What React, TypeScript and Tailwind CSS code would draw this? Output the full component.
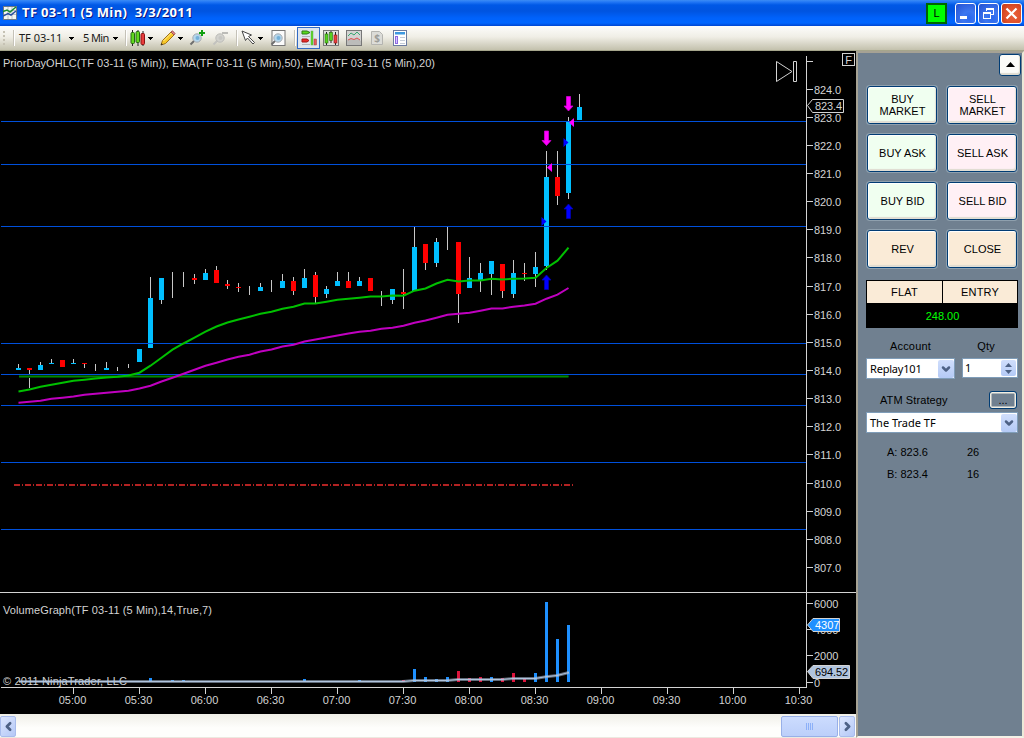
import type { ReactNode } from 'react'
import { ChevronDown, ChevronLeft, ChevronRight } from 'lucide-react'

type Side = 'up' | 'down' | 'none'

// side, wick top, wick bottom, body top, body bottom
type Candle = [Side, number, number, number, number]

const UP = '#00bfff'
const DOWN = '#ff0000'
const AXIS = '#d3d3d3'

const CANDLES: Candle[] = [
  ['up', 364, 370, 368, 370],
  ['down', 368, 388, 368, 370],
  ['up', 362, 370, 365, 370],
  ['up', 359, 364, 363, 364],
  ['down', 360, 367, 360, 367],
  ['up', 359, 364, 363, 364],
  ['down', 363, 368, 363, 364],
  ['none', 364, 371, 0, 0],
  ['up', 362, 370, 368, 370],
  ['none', 367, 371, 0, 0],
  ['none', 364, 368, 0, 0],
  ['up', 349, 362, 349, 362],
  ['up', 277, 348, 298, 348],
  ['up', 278, 304, 278, 300],
  ['none', 272, 298, 0, 0],
  ['none', 272, 287, 0, 0],
  ['down', 274, 284, 278, 280],
  ['up', 269, 280, 273, 280],
  ['down', 266, 283, 270, 283],
  ['down', 280, 289, 284, 286],
  ['down', 283, 292, 287, 288],
  ['none', 286, 295, 0, 0],
  ['up', 283, 291, 287, 291],
  ['none', 280, 292, 0, 0],
  ['up', 274, 288, 281, 288],
  ['down', 277, 295, 281, 291],
  ['up', 269, 288, 278, 288],
  ['down', 272, 303, 275, 297],
  ['up', 286, 298, 289, 294],
  ['up', 272, 286, 281, 286],
  ['down', 272, 288, 281, 288],
  ['up', 277, 286, 281, 286],
  ['down', 278, 291, 278, 291],
  ['none', 291, 306, 0, 0],
  ['up', 289, 304, 289, 300],
  ['down', 269, 309, 292, 294],
  ['up', 227, 291, 247, 291],
  ['down', 244, 270, 244, 263],
  ['up', 238, 267, 242, 263],
  ['none', 227, 250, 0, 0],
  ['down', 242, 323, 242, 294],
  ['up', 257, 288, 278, 288],
  ['up', 263, 292, 273, 280],
  ['up', 261, 295, 261, 274],
  ['down', 264, 298, 264, 291],
  ['up', 260, 298, 273, 294],
  ['down', 263, 281, 273, 274],
  ['up', 252, 287, 267, 274],
  ['up', 151, 270, 177, 266],
  ['down', 151, 205, 177, 196],
  ['up', 117, 199, 122, 193],
  ['up', 94, 120, 107, 120]
]

const EMA20 = [
  391.5, 389.5, 386.7, 384.7, 382.7, 380.7, 379.7, 378.6, 377.5, 376.7, 375.5, 372.7, 365.7, 357.7,
  349.7, 343.5, 337.7, 331.7, 326.5, 322.5, 319.5, 316.7, 313.7, 311.7, 308.7, 306.7, 303.5, 303.5,
  301.7, 299.7, 298.7, 297.7, 296.5, 296.5, 295.5, 295.7, 290.7, 288.5, 283.5, 279.7, 281.5, 280.5,
  280.5, 278.7, 279.5, 278.7, 278.5, 277.7, 268, 260.7, 247.7
]

const EMA50 = [
  402.7, 401.7, 400.7, 398.7, 397.7, 396.5, 394.7, 393.7, 392.7, 391.7, 390.7, 388.5, 385.7, 381.5,
  377.7, 373.7, 369.7, 365.7, 362.7, 359.5, 356.7, 354.7, 351.5, 349.5, 346.5, 344.7, 341.5, 339.5,
  337.5, 335.5, 333.5, 331.7, 330.7, 328.7, 327.7, 325.7, 322.7, 320.5, 317.7, 314.7, 313.7, 312.7,
  310.7, 308.5, 308.5, 306.7, 305.5, 303.7, 298.7, 294.7, 288
]

const LEVELS = [121, 164, 226, 343, 374, 405, 462, 529]

// bar index, top of the bar, colour
const VOLUME: Array<[number, number, string]> = [
  [12, 678, '#1e90ff'], [14, 680, '#1e90ff'], [15, 680, '#1e90ff'], [26, 679, '#1e90ff'],
  [31, 680, '#1e90ff'], [35, 680, '#dc143c'], [36, 669, '#1e90ff'], [37, 677, '#1e90ff'],
  [38, 679, '#1e90ff'], [39, 677, '#1e90ff'], [40, 671, '#dc143c'], [41, 678, '#dc143c'],
  [42, 677, '#dc143c'], [43, 677, '#1e90ff'], [44, 678, '#dc143c'], [45, 673, '#dc143c'],
  [46, 679, '#dc143c'], [47, 673, '#1e90ff'], [48, 602, '#1e90ff'], [49, 639, '#1e90ff'],
  [50, 625, '#1e90ff']
]

const VOLUME_AVG =
  '19,681.5 403,681.5 414,680.5 447,680.5 458,679.5 502,679.5 513,678.5 535,678.5 546,676.7 557,675.5 569,672.5'

const TIMES = ['05:00', '05:30', '06:00', '06:30', '07:00', '07:30', '08:00', '08:30', '09:00', '09:30', '10:00', '10:30']

const barX = (i: number) => 18 + i * 11
const toPoints = (ys: number[]) => ys.map((y, i) => `${barX(i) + 0.5},${y}`).join(' ')

function Arrow({ x, y, dir, color, edge }: { x: number; y: number; dir: 'up' | 'down'; color: string; edge: string }) {
  const d = dir === 'down' ? 'M-1.5 0.5H2.5V10H5L0.5 15L-4 10H-1.5Z' : 'M-1.5 14.5H2.5V5H5L0.5 0L-4 5H-1.5Z'
  return <path d={d} transform={`translate(${x} ${y})`} fill={color} stroke={edge} strokeWidth="0.8" />
}

function Chart() {
  return (
    <svg width="856" height="663" viewBox="0 51 856 663" className="block bg-black font-['Liberation_Sans',Arial,sans-serif]" fontSize="11" fill={AXIS}>
      {/* Candles */}
      <g shapeRendering="crispEdges">
        {CANDLES.map(([side, high, low, top, bottom], i) => (
          <g key={i}>
            <rect x={barX(i)} y={high} width="1" height={low - high} fill="#c8c8c8" />
            {side !== 'none' && (
              <rect x={barX(i) - 2} y={top} width="5" height={bottom - top} fill={side === 'up' ? UP : DOWN} />
            )}
          </g>
        ))}
        {LEVELS.map(y => (
          <rect key={y} x="1" y={y} width="805" height="1" fill="#0050dc" />
        ))}
      </g>

      {/* Indicators */}
      <path d="M19 376.5H568.5" stroke="#004800" strokeWidth="3" />
      <path d="M19 376.5H568.5" stroke="#008a00" strokeWidth="1" />
      <polyline points={toPoints(EMA50)} fill="none" stroke="#c000c0" strokeWidth="2" />
      <polyline points={toPoints(EMA20)} fill="none" stroke="#00c000" strokeWidth="2" />
      <path d="M14 485H573" stroke="#b22222" strokeWidth="2" strokeDasharray="6 2 1 2" shapeRendering="crispEdges" />

      {/* Executions */}
      <Arrow x={546} y={130.5} dir="down" color="#ff00ff" edge="#d000d0" />
      <Arrow x={568} y={96} dir="down" color="#ff00ff" edge="#d000d0" />
      <Arrow x={546} y={275} dir="up" color="#0000ff" edge="#0000b0" />
      <Arrow x={568} y={204} dir="up" color="#0000ff" edge="#0000b0" />
      <path d="M547 167.5L552 163V172Z M569 122.5L574 118V127Z" fill="#ff00ff" />
      <path d="M546.500 221.500L541.500 217V226Z M568.500 142.500L563.500 138V147Z" fill="#0000ff" />

      <path d="M776.500 61.500V81.500L792 71.500Z M793.500 61.500H796.500V81.500H793.500Z" fill="none" stroke={AXIS} />
      <rect x="842.500" y="53.500" width="12" height="12" fill="none" stroke={AXIS} />
      <text x="848.500" y="63.500" textAnchor="middle">F</text>
      <text x="3" y="67" textLength="432">PriorDayOHLC(TF 03-11 (5 Min)), EMA(TF 03-11 (5 Min),50), EMA(TF 03-11 (5 Min),20)</text>

      {/* Price axis */}
      <g shapeRendering="crispEdges">
        <rect x="806" y="56" width="1" height="632" />
        <rect x="807" y="61" width="6" height="1" />
        <rect x="0" y="592" width="856" height="1" />
        <rect x="1" y="687" width="806" height="1" />
      </g>
      {Array.from({ length: 18 }, (_, i) => {
        const y = Math.floor(89 + i * 28.15)
        return (
          <g key={i}>
            <rect x="807" y={y} width="6" height="1" />
            <text x="814" y={y + 5} textLength="27">{`${824 - i}.0`}</text>
          </g>
        )
      })}
      <path d="M807.500 105.500L812.500 99.500H843.500V112.500H812.500Z" fill="#000" stroke={AXIS} />
      <text x="815" y="110" textLength="27">823.4</text>

      {/* Volume */}
      <text x="3" y="614" textLength="209">VolumeGraph(TF 03-11 (5 Min),14,True,7)</text>
      <text x="3" y="685" textLength="124">© 2011 NinjaTrader, LLC</text>
      <g shapeRendering="crispEdges">
        {VOLUME.map(([i, top, color]) => (
          <rect key={i} x={barX(i) - 1} y={top} width="3" height={682 - top} fill={color} />
        ))}
      </g>
      <polyline points={VOLUME_AVG} fill="none" stroke="#b0c4de" strokeOpacity="0.55" strokeWidth="3" />
      <polyline points={VOLUME_AVG} fill="none" stroke="#b0c4de" strokeWidth="1" />
      {[603, 629, 655, 682].map((y, i) => (
        <g key={y}>
          <rect x="807" y={y} width="6" height="1" />
          <text x="814" y={y + 5}>{6000 - i * 2000}</text>
        </g>
      ))}
      <path d="M807.500 625L813 618.500H839.500V631.500H813Z" fill="#1e90ff" stroke={AXIS} />
      <text x="815" y="629" fill="#fff">4307</text>
      <path d="M807.500 671.500L813 665.500H849.500V678.500H813Z" fill="#b0c4de" stroke={AXIS} />
      <text x="815" y="676" fill="#000" textLength="33">694.52</text>

      {/* Time axis */}
      {TIMES.map((t, i) => (
        <g key={t}>
          <rect x={73 + i * 66} y="688" width="1" height="6" />
          <text x={72.5 + i * 66} y="704" textAnchor="middle">{t}</text>
        </g>
      ))}
    </svg>
  )
}

function Icon({ children, className = '' }: { children: ReactNode; className?: string }) {
  return (
    <svg width="16" height="16" viewBox="0 0 16 16" fill="none" className={`shrink-0 ${className}`}>
      {children}
    </svg>
  )
}

function Caret({ className = '' }: { className?: string }) {
  return (
    <svg width="5" height="3" viewBox="0 0 5 3" shapeRendering="crispEdges" className={`shrink-0 ${className}`}>
      <path d="M0 0H5V1H4V2H3V3H2V2H1V1H0Z" fill="#000" />
    </svg>
  )
}

function Separator({ className = '' }: { className?: string }) {
  return <div className={`h-4 w-0.5 shrink-0 border-l border-[#c5c2b8] bg-white ${className}`} />
}

function Glass({ dim = false }: { dim?: boolean }) {
  return (
    <>
      <path d="M6 10L1.500 14.500" stroke={dim ? '#c2c2be' : '#6e6e6e'} strokeWidth="2" />
      <circle cx="8" cy="8" r="4.200" fill={dim ? '#d2d2ce' : '#b4d6ec'} stroke={dim ? '#bdbdb9' : '#a8acb0'} />
      <circle cx="8.500" cy="8" r="2" fill={dim ? '#c6c6c2' : '#74b0d8'} />
    </>
  )
}

function TitleBar() {
  return (
    <div className="flex h-[26px] items-center bg-[linear-gradient(180deg,#3c8cf4_0,#2277f5_2px,#0058e6_5px,#0054e0_11px,#0062fb_18px,#0066ff_23px,#0046d0_26px)]">
      <Icon className="ml-[3px] -mt-px">
        <rect x="0.500" y="1.500" width="13" height="13" fill="#f4f6f2" stroke="#6c7a88" />
        <path d="M1 5.500H13M1 9.500H13M5 2V14M9 2V14" stroke="#b8c0c8" />
        <path d="M0 6.500L4 5L7 7L13 2" stroke="#178a2e" strokeWidth="1.500" />
        <path d="M0 11L5 8.500L8 10L13 6" stroke="#2850a0" strokeWidth="1.500" />
      </Icon>
      <div className="ml-[3px] text-[13px] font-bold whitespace-pre text-white [text-shadow:1px_1px_#0a1883] font-['Open_Sans',sans-serif] tracking-[0.35px]">
        TF 03-11 (5 Min)  3/3/2011
      </div>
      <div className="ml-auto flex h-[21px] w-[21px] items-center justify-center border-2 border-[#006400] bg-[#00ff00] font-['Liberation_Sans',Arial,sans-serif] text-[11px] text-black">
        L
      </div>
      <div className="mr-0.5 ml-2 flex gap-[2px]">
        <div className="h-[21px] w-[21px] rounded-[3px] border border-white bg-[radial-gradient(circle_at_70%_75%,#2a68ee,#3d77f0_35%,#2450d0_100%)]">
          <div className="mt-[12px] ml-1 h-[3px] w-[7px] bg-white" />
        </div>
        <div className="h-[21px] w-[21px] rounded-[3px] border border-white bg-[radial-gradient(circle_at_70%_75%,#2a68ee,#3d77f0_35%,#2450d0_100%)]">
          <svg width="19" height="19" viewBox="0 0 19 19" fill="none" stroke="#fff" shapeRendering="crispEdges">
            <path d="M7.500 7V4.500H14.500V10.500H12M7 5.500H15" />
            <path d="M4.500 8.500H11.500V14.500H4.500Z M4 9.500H12" />
          </svg>
        </div>
        <div className="h-[21px] w-[21px] rounded-[3px] border border-white bg-[radial-gradient(circle_at_60%_60%,#e8603a,#e0512c_50%,#c23a18_100%)]">
          <svg width="19" height="19" viewBox="0 0 19 19" stroke="#fff" strokeWidth="2.200">
            <path d="M4.500 4.500L14.500 14.500M14.500 4.500L4.500 14.500" />
          </svg>
        </div>
      </div>
    </div>
  )
}

function Toolbar() {
  return (
    <div className="flex h-[25px] items-center border-b border-[#a6a68c] bg-[linear-gradient(180deg,#fdfdfb,#f0eee6_45%,#c3c1ad)] font-['Noto_Sans',Tahoma,sans-serif] text-[11px] text-[#1a1a1a]">
      <div className="ml-[3px] flex w-[2px] flex-col gap-[2px]">
        {[0, 1, 2, 3].map(i => (
          <div key={i} className="h-[2px] w-[2px] bg-[#c6c2b4]" />
        ))}
      </div>
      <Separator className="ml-2" />
      <span className="ml-1 w-[45px] whitespace-nowrap">TF 03-11</span>
      <Caret className="ml-[5px]" />
      <span className="ml-[9px] w-[25px] whitespace-nowrap tracking-[-0.6px]">5 Min</span>
      <Caret className="ml-[5px]" />
      <Separator className="ml-[7px]" />

      <Icon className="ml-[3px]">
        <path d="M2.500 0V16M8 0V16M13 1V16" stroke="#222" />
        <rect x="1" y="2.500" width="3.500" height="11" rx="1" fill="#62d820" stroke="#256a10" />
        <rect x="6" y="1.500" width="3.500" height="11" rx="1" fill="#62d820" stroke="#256a10" />
        <rect x="11" y="3.500" width="3.500" height="11" rx="1" fill="#e83c3c" stroke="#8c1414" />
      </Icon>
      <Caret className="ml-[2px]" />
      <Icon className="ml-[7px]">
        <path d="M1 15L2.500 10.500L11 2L14 5L5.500 13.500Z" fill="#f8c828" stroke="#a07018" />
        <path d="M11 2L12.500 0.800L15 3.500L14 5Z" fill="#e88888" stroke="#a05050" />
        <path d="M3.500 11L11.500 3" stroke="#ffec90" />
        <path d="M0.800 15.200L1.500 13L3 14.500Z" fill="#333" />
      </Icon>
      <Caret className="ml-[2px]" />
      <Icon className="ml-[6px]">
        <Glass />
        <path d="M13 0V6M10 3H16" stroke="#12a012" strokeWidth="2" />
      </Icon>
      <Icon className="ml-[7px]">
        <Glass dim />
        <path d="M10 3H16" stroke="#bcbcb8" strokeWidth="2" />
      </Icon>
      <Separator className="ml-2" />
      <Icon className="ml-[3px]">
        <path d="M1 1L10.500 5L7.500 6.500L13.500 12.500L12 14L6.500 8L4.500 10.500Z" fill="#fff" stroke="#444" />
      </Icon>
      <Caret className="ml-[1px]" />
      <Icon className="ml-[7px]">
        <rect x="2" y="0.500" width="13" height="15" fill="#fbfbfb" stroke="#777" />
        <Glass />
      </Icon>
      <Separator className="ml-2" />

      <div className="ml-px flex h-[22px] w-[23px] shrink-0 items-center justify-center border border-[#316ac5] bg-[#dfe6ee]">
        <Icon>
          <path d="M1 2.500H7M1 6.500H9M1 10.500H7M1 14.500H9" stroke="#b0b4b8" />
          <path d="M1 1H6L9 2.500L6 4H1Z" fill="#58d81c" stroke="#2c7c14" />
          <path d="M1 9H6L8 10.500L6 12H1Z" fill="#e82c2c" stroke="#a01414" />
          <rect x="10" y="1" width="2" height="14" fill="#58d81c" stroke="#6aa860" strokeWidth="0.500" />
          <rect x="13" y="9" width="2.500" height="6" fill="#e85c5c" stroke="#984040" strokeWidth="0.500" />
        </Icon>
      </div>
      <Icon className="ml-[3px]">
        <rect x="0.500" y="0.500" width="15" height="15" fill="#e0e0dc" stroke="#777" />
        <path d="M3.500 2V15M8 1V13M12.500 2V15" stroke="#222" />
        <rect x="2" y="4" width="3" height="9" fill="#58d020" stroke="#2a7010" strokeWidth="0.600" />
        <rect x="6.500" y="2.500" width="3" height="8" fill="#58d020" stroke="#2a7010" strokeWidth="0.600" />
        <rect x="11" y="5" width="3" height="8" fill="#e84040" stroke="#8c1414" strokeWidth="0.600" />
      </Icon>
      <Icon className="ml-[7px]">
        <rect x="0.500" y="0.500" width="15" height="15" fill="#d4d4d2" stroke="#777" />
        <path d="M1 10L5 8.500L8 9.500L11 8L15 11V15H1Z" fill="#bcbcba" />
        <path d="M2 6L5 3L8 5L11 2L14 5" stroke="#38a870" />
        <path d="M2 10L5 8.500L8 9.500L11 8L14 10" stroke="#e05050" />
      </Icon>
      <Icon className="ml-[7px]">
        <path d="M2.500 1.500H10.500L13.500 4.500V14.500H2.500Z" fill="#dcdcd8" stroke="#b4b4b0" />
        <text x="8" y="12" textAnchor="middle" fontSize="10" fontWeight="bold" fill="#9c9c98">$</text>
      </Icon>
      <Icon className="ml-[7px]">
        <rect x="1.500" y="0.500" width="13" height="15" fill="#fff" stroke="#6c7ca0" />
        <rect x="3" y="2" width="10" height="2.500" fill="#3c98e0" />
        <rect x="3.500" y="6.500" width="2" height="7" fill="#d8c8ff" stroke="#8c68e0" />
        <path d="M8 7.500H13M8 10.500H13M8 13.500H13" stroke="#c4ccd8" />
      </Icon>
    </div>
  )
}

function OrderButton({ children, tone }: { children: ReactNode; tone: string }) {
  return (
    <button className={`flex h-[38px] w-[70px] items-center justify-center rounded-[3px] border border-[#003c74] pl-px text-center text-[11px] leading-3 shadow-[inset_0_1px_1px_#fff,inset_1px_0_1px_#fff,inset_-1px_-2px_1px_#dedbd0,0_0_0_1px_#8fa0ae] ${tone}`}>
      {children}
    </button>
  )
}

function DropArrow() {
  return (
    <div className="flex h-[18px] w-4 items-center justify-center rounded-[2px] bg-[linear-gradient(180deg,#d0defc,#b4caf6)]">
      <ChevronDown size={12} strokeWidth={5} color="#4d6185" />
    </div>
  )
}

const BUY = 'bg-[#f0fff0]'
const SELL = 'bg-[#fff0f5]'
const NEUTRAL = 'bg-[#faebd7]'

function OrderPanel() {
  return (
    <div className="flex w-[168px] flex-col border-t-2 border-r-2 border-b-2 border-l-2 border-t-[#a6a294] border-r-[#ece9d8] border-b-[#f4f2e8] border-l-[#a6a294] bg-[#708090] font-['Liberation_Sans',Arial,sans-serif] text-[11px] leading-3 text-black">
      <button className="mt-px mr-px flex h-[22px] w-[22px] items-center justify-center self-end rounded-[3px] border border-[#003c74] bg-[#fbfbf8] shadow-[inset_-1px_-2px_1px_#dedbd0]">
        <svg width="9" height="5" viewBox="0 0 9 5" className="-mt-0.5">
          <path d="M4.500 0L9 5H0Z" fill="#000" />
        </svg>
      </button>

      <div className="mt-[10px] ml-[9px] grid grid-cols-[70px_70px] gap-[10px]">
        <OrderButton tone={BUY}>BUY<br />MARKET</OrderButton>
        <OrderButton tone={SELL}>SELL<br />MARKET</OrderButton>
        <OrderButton tone={BUY}>BUY ASK</OrderButton>
        <OrderButton tone={SELL}>SELL ASK</OrderButton>
        <OrderButton tone={BUY}>BUY BID</OrderButton>
        <OrderButton tone={SELL}>SELL BID</OrderButton>
        <OrderButton tone={NEUTRAL}>REV</OrderButton>
        <OrderButton tone={NEUTRAL}>CLOSE</OrderButton>
      </div>

      <div className="mt-3 ml-2 w-[152px] bg-black p-px text-center">
        <div className="grid h-[22px] grid-cols-[75px_74px] gap-px leading-[22px] tracking-[0.2px]">
          <div className="bg-[#faebd7]">FLAT</div>
          <div className="bg-[#faebd7]">ENTRY</div>
        </div>
        <div className="h-6 pl-px leading-[26px] text-[#00ff00]">248.00</div>
      </div>

      <div className="mt-3 ml-2 flex tracking-[0.2px]">
        <span className="w-[89px] text-center">Account</span>
        <span className="ml-[3px] w-[56px] text-center">Qty</span>
      </div>
      <div className="mt-[6px] ml-2 flex items-start font-['Noto_Sans',Tahoma,sans-serif]">
        <div className="flex h-[21px] w-[89px] items-center border border-[#7f9db9] bg-white">
          <span className="ml-[3px] flex-1 tracking-[-0.2px]">Replay101</span>
          <DropArrow />
        </div>
        <div className="ml-[7px] flex h-5 w-[56px] items-center border border-[#7f9db9] bg-white">
          <span className="ml-[2px] flex-1 pb-px">1</span>
          <div className="mr-px flex h-4 w-[15px] flex-col items-center justify-center gap-[3px] rounded-[2px] bg-[linear-gradient(180deg,#d0defc,#b4caf6)]">
            <svg width="7" height="4" viewBox="0 0 7 4"><path d="M3.500 0L7 4H0Z" fill="#4d6185" /></svg>
            <svg width="7" height="4" viewBox="0 0 7 4"><path d="M3.500 4L0 0H7Z" fill="#4d6185" /></svg>
          </div>
        </div>
      </div>

      <div className="mt-3 ml-[22px] flex items-center">
        <span className="w-[109px] tracking-[0.1px]">ATM Strategy</span>
        <button className="h-[18px] w-[28px] rounded-[3px] border border-[#003c74] text-[11px] leading-[14px] shadow-[inset_0_0_0_1.500px_#f0ede2]">...</button>
      </div>
      <div className="mt-[3px] ml-2 flex h-[21px] w-[152px] items-center border border-[#7f9db9] bg-white font-['Noto_Sans',Tahoma,sans-serif]">
        <span className="ml-[3px] flex-1">The Trade TF</span>
        <DropArrow />
      </div>

      <div className="mt-[13px] ml-[29px] grid grid-cols-[80px_40px] gap-y-[10px]">
        <span>A: 823.6</span>
        <span>26</span>
        <span>B: 823.4</span>
        <span>16</span>
      </div>
    </div>
  )
}

function ScrollBar() {
  return (
    <div className="flex h-6 items-center border-b border-[#ece9e0] bg-[linear-gradient(180deg,#f0efe8,#fefefc_60%)] pt-px">
      <div className="flex h-[21px] w-4 items-center justify-center rounded-[2px] border border-[#a8bcec] bg-[linear-gradient(135deg,#dce6fe,#b4c8f6)]">
        <ChevronLeft size={13} strokeWidth={5} color="#4d6185" className="shrink-0" />
      </div>
      <div className="ml-auto flex h-[21px] w-[57px] items-center justify-center gap-px rounded-[2px] border border-[#98b0e8] bg-[linear-gradient(180deg,#ccdcfe,#bccffa)]">
        {[0, 1, 2, 3].map(i => (
          <div key={i} className="h-[7px] w-px bg-[#8cb0f8]" />
        ))}
      </div>
      <div className="mr-px ml-px flex h-[21px] w-4 items-center justify-center rounded-[2px] border border-[#a8bcec] bg-[linear-gradient(135deg,#dce6fe,#b4c8f6)]">
        <ChevronRight size={13} strokeWidth={5} color="#4d6185" className="shrink-0" />
      </div>
    </div>
  )
}

export default function App() {
  return (
    <div className="flex h-[738px] w-[1024px] flex-col overflow-hidden bg-[#ece9d8]">
      <TitleBar />
      <Toolbar />
      <div className="flex h-[687px]">
        <div className="flex w-[856px] flex-col">
          <Chart />
          <ScrollBar />
        </div>
        <OrderPanel />
      </div>
    </div>
  )
}
